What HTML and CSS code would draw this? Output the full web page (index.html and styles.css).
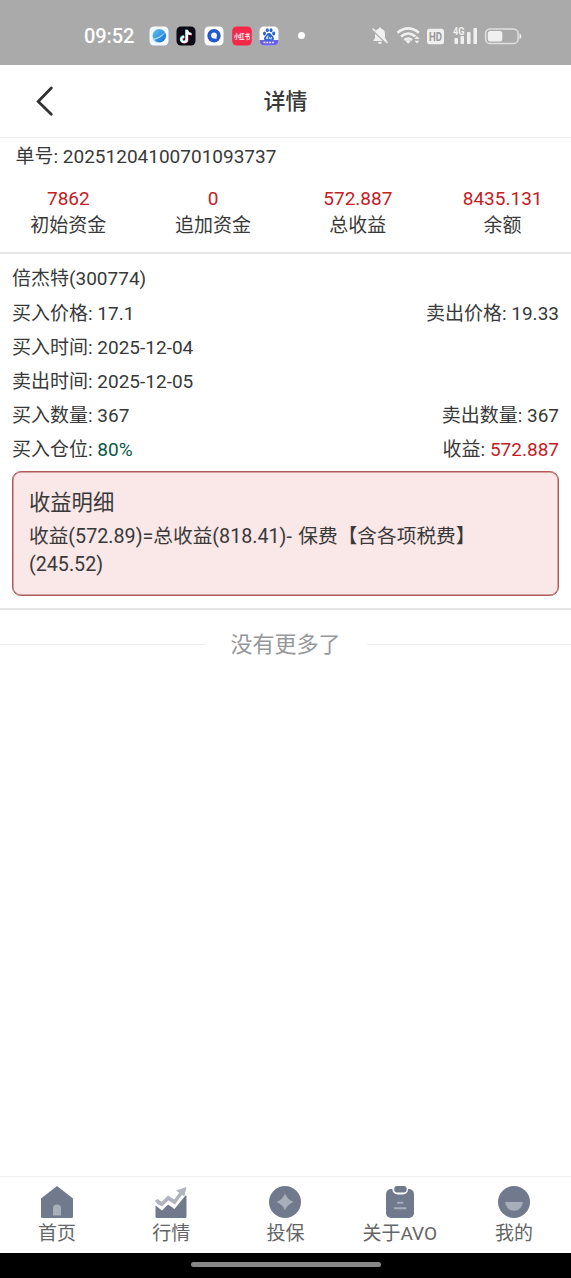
FILE: index.html
```html
<!DOCTYPE html>
<html lang="zh-CN">
<head>
<meta charset="utf-8">
<title>详情</title>
<link rel="stylesheet" href="styles.css">
</head>
<body>
<div class="screen">
  <div class="status">
    <span class="clock">09:52</span>
    <div class="apps">
      <svg width="20" height="20" viewBox="0 0 20 20"><defs><linearGradient id="g" x1="0" y1="0" x2="1" y2="1"><stop offset="0" stop-color="#62c8f5"/><stop offset="1" stop-color="#1467c8"/></linearGradient></defs><rect x=".5" y=".5" width="19" height="19" rx="4.5" fill="#f4faff"/><circle cx="10.3" cy="9.8" r="6.8" fill="url(#g)"/><path d="M3.500 12.500C4 16 7.500 17.200 10.500 16.500 8 16.500 6 15.500 5.500 13.500 10 13 15 9 16.500 5.500 13.500 9 9 12 3.500 12.500Z" fill="#a5ddfa"/></svg>
      <svg width="20" height="20" viewBox="0 0 20 20"><rect x=".5" y=".5" width="19" height="19" rx="4.500" fill="#0c0a14"/><g fill="none" stroke-width="2.200"><path d="M10.200 3.500V13a2.700 2.700 0 1 1-2.700-2.700M10.200 3.800c.4 2.500 2 3.800 4.600 3.800" stroke="#25e5df"/><path d="M11.400 4.300V13.800a2.700 2.700 0 1 1-2.700-2.700M11.400 4.500c.4 2.500 2 3.800 4.600 3.800" stroke="#f43b60"/><path d="M10.800 4V13.400a2.700 2.700 0 1 1-2.700-2.700M10.800 4c.4 2.500 2 4 4.600 4" stroke="#fff"/></g></svg>
      <svg width="20" height="20" viewBox="0 0 20 20"><rect x=".5" y=".5" width="19" height="19" rx="4.500" fill="#fff"/><circle cx="10" cy="9.800" r="6.700" fill="#2358d0"/><circle cx="10" cy="9.500" r="2.900" fill="#fff"/><path d="M10 12l2.500 1-.3-3z" fill="#fff"/></svg>
      <svg width="20" height="20" viewBox="0 0 20 20"><rect x=".2" y=".5" width="19.600" height="19" rx="4.500" fill="#f5284a"/><text class="app-red" x="10" y="12.600" textLength="16" lengthAdjust="spacingAndGlyphs">小红书</text></svg>
      <svg width="20" height="20" viewBox="0 0 20 20"><rect x=".5" y=".5" width="19" height="19" rx="4.500" fill="#fff"/><path d="M.5 14h19v1a4.500 4.500 0 0 1-4.500 4.500H5A4.500 4.500 0 0 1 .5 15z" fill="#6d62e6"/><g fill="#2867cf"><ellipse cx="5.500" cy="7.500" rx="1.500" ry="2"/><ellipse cx="8.300" cy="4.300" rx="1.500" ry="2"/><ellipse cx="12" cy="4.300" rx="1.500" ry="2"/><ellipse cx="14.700" cy="7.500" rx="1.500" ry="2"/><path d="M10 7c2 0 2.500 2 4 3.500s1.200 4.200-1.300 4.200H7.300C4.800 14.700 4.500 12 6 10.500S8 7 10 7z"/></g><path d="M8.800 9.500v3.200H7.600v-1.700h1M10.700 11v1.800h1.700V11" stroke="#fff" stroke-width=".8" fill="none"/><path d="M4.500 16.500h11" stroke="#ddd9ff" stroke-width="1.300" stroke-dasharray="2 .8"/></svg>
    </div>
    <i class="dot"></i>
    <svg class="signals" width="152" height="22" viewBox="0 0 152 22">
      <g fill="#f0f0f0">
        <path d="M10 2.500c.9 0 1.300.5 1.300 1.200 2.400.7 3.700 2.600 3.700 5v4.300l2 3H3.200L5 13V8.700c0-2.400 1.300-4.300 3.700-5 0-.7.4-1.200 1.300-1.200zM8 17h4c0 1.200-.8 2-2 2s-2-.8-2-2z"/>
        <path d="M1.700 4.500l14 13.500" stroke="#aaa" stroke-width="1.500"/><path d="M2.500 3.500l15 14.500" stroke="#f0f0f0" stroke-width="1.500"/>
        <g fill="none" stroke="#f0f0f0" stroke-width="2.500"><path d="M27.500 7.700q10.700-8.600 21.400 0M31 11.500q7.200-5.900 14.400 0M34.300 15q3.900-3 7.800 0"/></g><path d="M35.500 16l2.700 2.800 2.700-2.800q-2.700-2-5.400 0zM44.500 14l2.500-3 2.500 3zM44.500 15.700h5L47 18.500z"/>
        <rect x="57" y="3.800" width="17" height="15.400" rx="2.500"/>
        <rect x="84.500" y="13" width="3.500" height="6" rx=".7"/><rect x="90.500" y="11" width="3.500" height="8" rx=".7"/><rect x="97" y="7" width="3.500" height="12" rx=".7"/><rect x="103.500" y="3" width="3.500" height="16" rx=".7"/>
        <rect x="115.600" y="3.900" width="32.500" height="14.700" rx="4.700" fill="none" stroke="#e0e0e0" stroke-width="1.500"/><rect x="117.800" y="6" width="14.500" height="10.500" rx="2.500"/><path d="M149.500 8.500q1.800 0 1.800 2.800t-1.800 2.800z"/>
      </g>
      <text class="hd" x="65.500" y="15.700" textLength="13" lengthAdjust="spacingAndGlyphs">HD</text>
      <text class="net" x="83" y="10" textLength="11.500" lengthAdjust="spacingAndGlyphs">4G</text>
    </svg>
  </div>
  <header class="nav">
    <svg class="back" width="20" height="32" viewBox="0 0 20 32"><path d="M17.300 3L4.200 16.500l13.100 12.700" fill="none" stroke="#323233" stroke-width="2.800" stroke-linecap="round"/></svg>
    <h1 class="title">详情</h1>
  </header>
  <section class="summary">
    <div class="order">单号: 20251204100701093737</div>
    <div class="stats">
      <div class="stat"><b class="red">7862</b><span>初始资金</span></div>
      <div class="stat"><b class="red">0</b><span>追加资金</span></div>
      <div class="stat"><b class="red">572.887</b><span>总收益</span></div>
      <div class="stat"><b class="red">8435.131</b><span>余额</span></div>
    </div>
  </section>
  <section class="trade">
    <div class="row stock">倍杰特(300774)</div>
    <div class="row"><span>买入价格: 17.1</span><span>卖出价格: 19.33</span></div>
    <div class="row">买入时间: 2025-12-04</div>
    <div class="row">卖出时间: 2025-12-05</div>
    <div class="row"><span>买入数量: 367</span><span>卖出数量: 367</span></div>
    <div class="row"><span>买入仓位: <em class="green">80%</em></span><span>收益: <em class="red">572.887</em></span></div>
    <div class="detail">
      <div class="detail-title">收益明细</div>
      <div class="detail-text">收益(572.89)=总收益(818.41)- 保费【含各项税费】(245.52)</div>
    </div>
  </section>
  <div class="end">没有更多了</div>
  <nav class="tabs">
    <div class="tab"><svg width="34" height="34" viewBox="0 0 34 34"><path d="M17 1L33 13.500V31.500a1.500 1.500 0 0 1-1.500 1.500h-29A1.500 1.500 0 0 1 1 31.500V13.500z" fill="#707a8c"/><path d="M13 30.500V23.500a4 4 0 0 1 8 0v7z" fill="#a9afba"/></svg><span>首页</span></div>
    <div class="tab"><svg width="34" height="34" viewBox="0 0 34 34"><path d="M1.500 20.500l6.500 5 6-6 6.500 4.500L31.500 10.500l1 .5V31.500a1.500 1.500 0 0 1-1.500 1.500H3A1.500 1.500 0 0 1 1.500 31.500z" fill="#707a8c"/><path d="M1 15.800l2.500-1.800 4.200 2.700 6.300-6.200 6.200 4 5-6.700-3.200-2.300L32.500 2l-2.200 9.500-2.300-1.700-7 9.700-6.500-4L8 21.500 3.500 19z" fill="#b0b5bd"/></svg><span>行情</span></div>
    <div class="tab"><svg width="34" height="34" viewBox="0 0 34 34"><circle cx="17" cy="17" r="16" fill="#707a8c"/><path d="M17 8.500q2.300 6.200 8.500 8.500-6.200 2.300-8.500 8.500-2.300-6.200-8.500-8.500 6.200-2.300 8.500-8.500z" fill="#a9afba"/></svg><span>投保</span></div>
    <div class="tab"><svg width="34" height="34" viewBox="0 0 34 34"><rect x="3" y="4" width="28" height="29" rx="5" fill="#707a8c"/><rect x="9.500" y="-2" width="15.500" height="11.500" rx="5" fill="#fff"/><rect x="11.200" y="1" width="12.500" height="6.500" rx="3" fill="#707a8c"/><path d="M15 17.800h4.500M12 23.300h10.500" stroke="#a9afba" stroke-width="2" stroke-linecap="round"/></svg><span>关于AVO</span></div>
    <div class="tab"><svg width="34" height="34" viewBox="0 0 34 34"><circle cx="17" cy="17" r="16" fill="#707a8c"/><path d="M8.200 17h17.600a8.800 8.800 0 0 1-17.600 0z" fill="#a9afba"/></svg><span>我的</span></div>
  </nav>
  <div class="gesture"><i class="pill"></i></div>
</div>
</body>
</html>
```
FILE: styles.css
```css
* { box-sizing: border-box; }
body { margin: 0; background: #fff; color: #39393a; font: 19px/28px Roboto, "Noto Sans CJK SC", sans-serif; }
.screen { width: 571px; height: 1278px; display: flex; flex-direction: column; overflow: hidden; }
.status { height: 65px; flex: none; background: #aaa; display: flex; align-items: center; padding: 7px 49px 0 84px; }
.clock { color: #fff; font-size: 20px; font-weight: 500; width: 64.500px; letter-spacing: -.1px; }
.apps { display: flex; gap: 7.700px; }
.apps svg { display: block; }
.app-red { font: 700 6.500px "Noto Sans CJK SC", sans-serif; fill: #fff; text-anchor: middle; }
.dot { width: 7px; height: 7px; border-radius: 50%; background: #fff; margin-left: 19px; margin-top: -2px; }
.signals { margin-left: auto; }
.hd { font: 700 12px Roboto, sans-serif; fill: #999; text-anchor: middle; }
.net { font: 700 10px Roboto, sans-serif; fill: #f0f0f0; }
.nav { height: 73px; flex: none; border-bottom: 1px solid #ebedf0; display: grid; grid-template-columns: 1fr auto 1fr; align-items: center; padding: 0 34px; }
.title { margin: 0; padding-top: 2px; font-size: 22px; font-weight: 500; line-height: 30px; }
.summary { height: 116px; flex: none; border-bottom: 2px solid #e6e6e6; }
.order { padding: 5px 15.500px 0; height: 47px; }
.stats { display: grid; grid-template-columns: repeat(4, 1fr); margin: 0 -4px; }
.stat { display: flex; flex-direction: column; align-items: center; line-height: 28px; }
.stat b { font-weight: 400; line-height: 27px; }
.red { color: #c3201f; }
.green { color: #075746; }
em { font-style: normal; }
.trade { height: 356px; flex: none; border-bottom: 2px solid #e6e6e6; padding: 8px 12px 0; }
.row { height: 34px; line-height: 34px; display: flex; justify-content: space-between; white-space: pre; }
.stock { height: 35px; }
.detail { margin-top: 4px; height: 125px; border: 1.500px solid #b05a5a; box-shadow: inset 0 0 0 .5px #b05a5a; border-radius: 9px; background: #fae7e7; padding: 15px 16px; }
.detail-title { font-size: 21.300px; line-height: 32px; }
.detail-text { font-size: 19.700px; line-height: 27.500px; margin-top: 4px; width: 470px; word-spacing: 1.500px; }
.end { display: flex; align-items: center; gap: 26px; height: 69px; color: #969799; font-size: 22px; }
.end::before, .end::after { content: ""; flex: 1; height: 1px; background: #ebedf0; }
.tabs { margin-top: auto; height: 77px; flex: none; border-top: 1px solid #f0f1f2; display: grid; grid-template-columns: repeat(5, 1fr); }
.tab { display: flex; flex-direction: column; align-items: center; padding-top: 8px; color: #646566; line-height: 30px; }
.tab svg { display: block; }
.gesture { height: 25px; flex: none; background: #000; display: flex; justify-content: center; align-items: center; padding-bottom: 2px; }
.pill { width: 190px; height: 5px; border-radius: 3px; background: #888; }
```
